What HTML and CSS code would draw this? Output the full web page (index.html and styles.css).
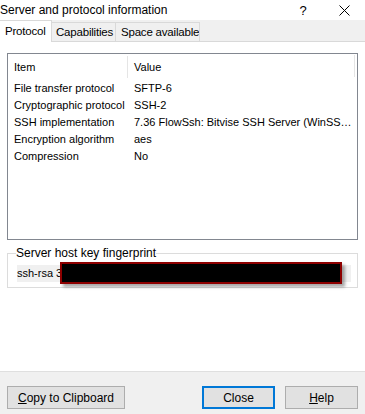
FILE: index.html
```html
<!DOCTYPE html>
<html>
<head>
<meta charset="utf-8">
<link rel="stylesheet" href="styles.css">
</head>
<body>
<div class="dialog">
  <div class="titlebar">
    <span class="title">Server and protocol information</span>
    <span class="help-btn">?</span>
    <span class="close-btn">
      <svg width="11" height="11" viewBox="0 0 11 11"><path d="M0.5 0.5 L10.5 10.5 M10.5 0.5 L0.5 10.5" stroke="#000" stroke-width="1" fill="none"/></svg>
    </span>
  </div>
  <div class="tabs">
    <div class="tab active">Protocol</div>
    <div class="tab">Capabilities</div>
    <div class="tab">Space available</div>
  </div>
  <div class="panel">
    <div class="list">
      <div class="list-head">
        <div class="col-item">Item</div>
        <div class="col-value head-value">Value</div>
        <div class="head-end"></div>
      </div>
      <div class="row"><div class="col-item">File transfer protocol</div><div class="col-value">SFTP-6</div></div>
      <div class="row"><div class="col-item">Cryptographic protocol</div><div class="col-value">SSH-2</div></div>
      <div class="row"><div class="col-item">SSH implementation</div><div class="col-value">7.36 FlowSsh: Bitvise SSH Server (WinSS…</div></div>
      <div class="row"><div class="col-item">Encryption algorithm</div><div class="col-value">aes</div></div>
      <div class="row"><div class="col-item">Compression</div><div class="col-value">No</div></div>
    </div>
    <fieldset class="group">
      <legend>Server host key fingerprint</legend>
      <div class="field">ssh-rsa 3<span class="redact"></span></div>
    </fieldset>
  </div>
  <div class="footer">
    <button class="btn btn-copy"><u>C</u>opy to Clipboard</button>
    <div class="spacer"></div>
    <button class="btn btn-close">Close</button>
    <button class="btn btn-help"><u>H</u>elp</button>
  </div>
</div>
</body>
</html>
```
FILE: styles.css
```css
* { box-sizing: border-box; }
html, body { margin: 0; padding: 0; }
body {
  width: 365px;
  height: 414px;
  overflow: hidden;
  background: #ffffff;
  font-family: "Liberation Sans", Arial, sans-serif;
  color: #000;
}
.dialog {
  display: flex;
  flex-direction: column;
  height: 414px;
}
.titlebar {
  height: 20px;
  display: flex;
  align-items: center;
  background: #fff;
  font-size: 12px;
}
.title { flex: 1; }
.help-btn { width: 14px; margin-right: 29px; font-size: 13px; text-align: center; }
.close-btn { width: 11px; margin-right: 15px; display: flex; }
.tabs {
  height: 22px;
  background: #f0f0f0;
  display: flex;
  align-items: flex-end;
  border-bottom: 1px solid #d9d9d9;
  font-size: 11.5px;
}
.tab {
  height: 19px;
  line-height: 18px;
  border: 1px solid #d9d9d9;
  border-bottom: none;
  border-left: none;
  background: #f0f0f0;
  white-space: nowrap;
  overflow: hidden;
  letter-spacing: -0.2px;
}
.tab.active {
  height: 22px;
  line-height: 20px;
  background: #fff;
  margin-bottom: -1px;
  padding-left: 5px;
  width: 52px;
}
.tab:nth-child(2) { width: 64px; padding-left: 4px; }
.tab:nth-child(3) { width: 84px; padding-left: 5px; }
.panel {
  flex: 1;
  background: #fff;
  padding: 11px 0 0 7px;
  font-size: 11px;
}
.list {
  width: 351px;
  height: 187px;
  border: 1px solid #828790;
}
.list-head {
  height: 26px;
  display: flex;
  align-items: center;
  position: relative;
}
.list-head .col-item {
  height: 22px;
  line-height: 22px;
  border-right: 1px solid #e5e5e5;
}
.head-end {
  position: absolute;
  left: 346px;
  top: 1px;
  height: 22px;
  border-left: 1px solid #e5e5e5;
}
.col-item { width: 120px; padding-left: 6px; white-space: nowrap; }
.col-value { padding-left: 6px; white-space: nowrap; }
.row {
  display: flex;
  height: 17px;
  line-height: 17px;
}
.group {
  margin: 7px 0 0 0;
  width: 351px;
  height: 41px;
  border: 1px solid #dcdcdc;
  padding: 0 5px 0 9px;
}
.group legend {
  padding: 0;
  margin-left: -1px;
  font-size: 12px;
  line-height: 12px;
}
.field {
  position: relative;
  margin-top: 6px;
  height: 17px;
  line-height: 17px;
  background: #f0f0f0;
  font-size: 11px;
  width: 334px;
}
.redact {
  position: absolute;
  left: 43px;
  top: -3px;
  width: 282px;
  height: 22px;
  background: #000;
  border: 2px solid #8d0000;
  box-shadow: 3px 3px 3px rgba(0,0,0,0.35);
}
.footer {
  height: 43px;
  background: #f0f0f0;
  border-top: 1px solid #dfdfdf;
  display: flex;
  align-items: flex-start;
  padding: 14px 7px 0 7px;
}
.spacer { flex: 1; }
.btn {
  font-family: "Liberation Sans", Arial, sans-serif;
  font-size: 12px;
  height: 23px;
  background: #e1e1e1;
  border: 1px solid #adadad;
  color: #000;
  padding: 0;
  margin: 0;
}
.btn-copy { width: 118px; }
.btn-close { width: 73px; border: 2px solid #0078d7; margin-right: 10px; }
.btn-help { width: 73px; }
```
